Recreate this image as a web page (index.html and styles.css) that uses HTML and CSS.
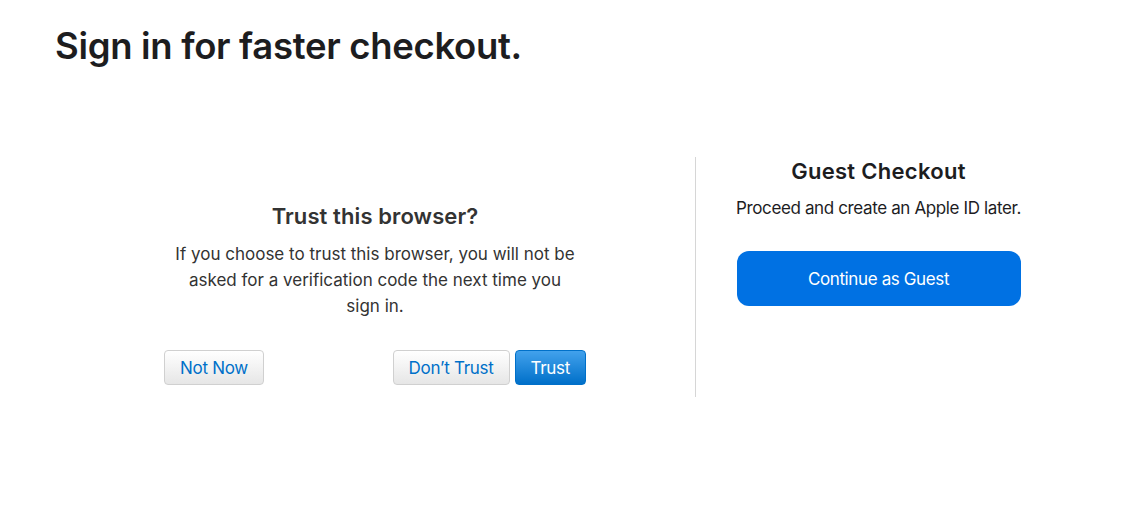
FILE: index.html
```html
<!DOCTYPE html>
<html>
<head>
<meta charset="utf-8">
<link rel="stylesheet" href="styles.css">
</head>
<body>
<div class="page">
  <h1 class="title">Sign in for faster checkout.</h1>
  <div class="columns">
    <section class="trust">
      <h2 class="trust-title">Trust this browser?</h2>
      <p class="trust-text">If you choose to trust this browser, you will not be asked for a verification code the next time you sign in.</p>
      <div class="trust-buttons">
        <button class="btn btn-gray">Not Now</button>
        <div class="btn-group">
          <button class="btn btn-gray">Don’t Trust</button>
          <button class="btn btn-blue">Trust</button>
        </div>
      </div>
    </section>
    <div class="divider"></div>
    <section class="guest">
      <h2 class="guest-title">Guest Checkout</h2>
      <p class="guest-text">Proceed and create an Apple ID later.</p>
      <button class="guest-btn">Continue as Guest</button>
    </section>
  </div>
</div>
</body>
</html>
```
FILE: styles.css
```css
* { box-sizing: border-box; }
html, body { margin: 0; padding: 0; background: #fff; }
body { font-family: Inter, "Noto Sans", sans-serif; color: #1d1d1f; }
.page { padding: 0 0 0 55px; }
.title {
  margin: 0;
  padding-top: 26px;
  font-size: 36.5px;
  line-height: 40px;
  font-weight: 600;
  letter-spacing: -0.32px;
  color: #1d1d1f;
}
.columns {
  display: flex;
  margin-top: 91px;
  width: 1006px;
}
.trust {
  width: 640px;
  display: flex;
  flex-direction: column;
  align-items: center;
  padding-top: 46px;
}
.trust-title {
  margin: 0;
  font-size: 22px;
  line-height: 26px;
  font-weight: 600;
  letter-spacing: 0.1px;
  color: #333;
}
.trust-text {
  margin: 12px 0 0;
  width: 410px;
  text-align: center;
  font-size: 17px;
  line-height: 26px;
  color: #333;
}
.trust-buttons {
  margin-top: 31px;
  width: 422px;
  display: flex;
  justify-content: space-between;
}
.btn-group { display: flex; gap: 5px; }
.btn {
  font-family: inherit;
  font-size: 17px;
  letter-spacing: -0.3px;
  height: 35px;
  padding: 0 15px;
  border-radius: 4px;
  cursor: pointer;
}
.btn-gray {
  background: linear-gradient(#fff, #e6e6e6);
  border: 1px solid #d0d0d0;
  color: #0070c9;
}
.btn-blue {
  background: linear-gradient(#42a1ec, #0070c9);
  border: 1px solid #0070c9;
  color: #fff;
}
.divider {
  width: 1px;
  height: 240px;
  background: #d6d6d6;
}
.guest {
  flex: 1;
  display: flex;
  flex-direction: column;
  align-items: center;
  padding-top: 1px;
}
.guest-title {
  margin: 0;
  font-size: 22px;
  line-height: 26px;
  font-weight: 600;
  letter-spacing: 0.3px;
  color: #1d1d1f;
}
.guest-text {
  margin: 12px 0 0;
  font-size: 17px;
  line-height: 24px;
  letter-spacing: -0.374px;
  color: #1d1d1f;
}
.guest-btn {
  margin-top: 31px;
  width: 284px;
  height: 55px;
  border: none;
  border-radius: 12px;
  background: #0071e3;
  color: #fff;
  font-family: inherit;
  font-size: 17px;
  letter-spacing: -0.374px;
}
```
